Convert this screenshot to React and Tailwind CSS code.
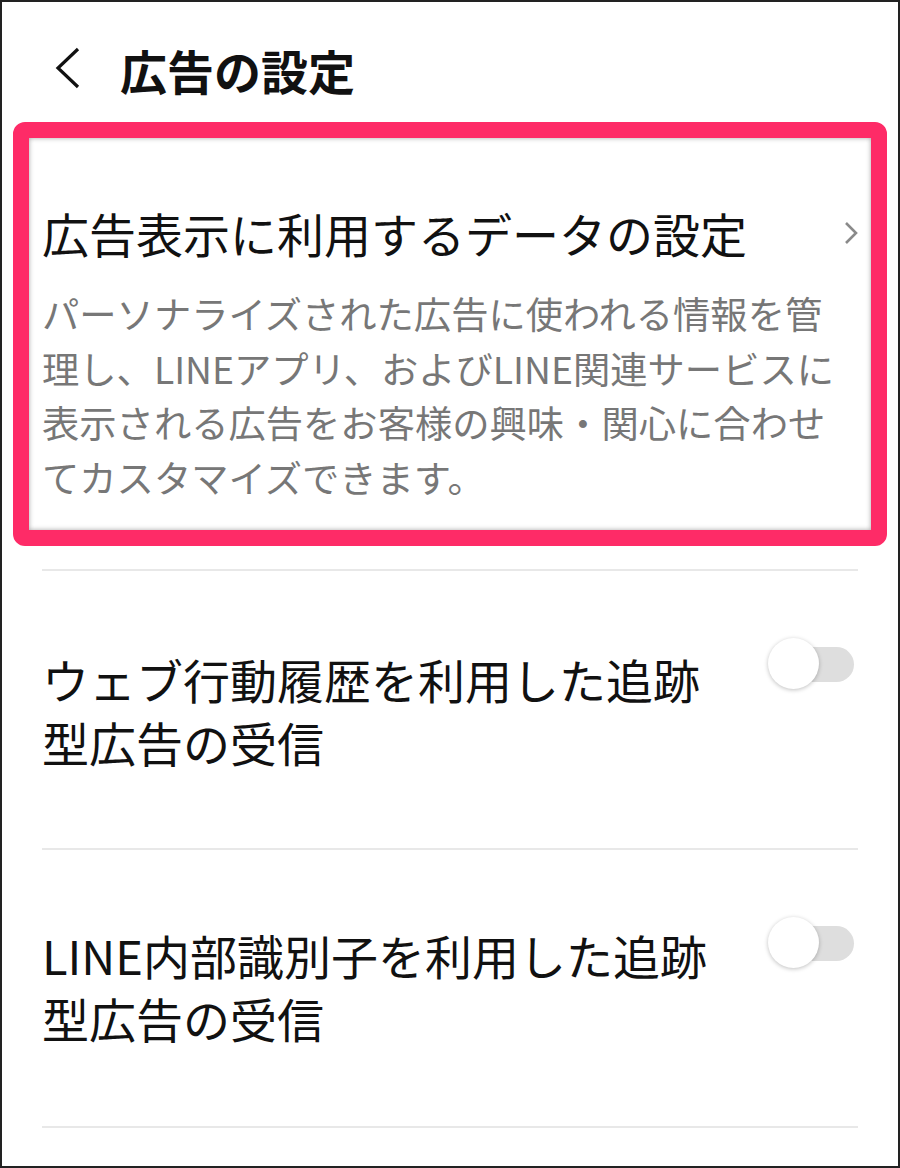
import React from "react";

const font = { fontFamily: '"Noto Sans CJK JP", "Noto Sans", sans-serif' };

const Toggle = () => (
  <div className="relative w-[87px] h-[52px] shrink-0">
    <div className="absolute left-[22px] top-[9px] w-[64px] h-[35px] rounded-full bg-[#dedede]" />
    <div className="absolute left-0 top-0 w-[51px] h-[51px] rounded-full bg-white shadow-[0_1px_4px_rgba(0,0,0,0.25)]" />
  </div>
);

const ToggleRow = ({ lines, toggleTop }) => (
  <div className="flex justify-between items-start">
    <p className="text-[47px] leading-[63px] text-[#111]">
      {lines[0]}
      <br />
      {lines[1]}
    </p>
    <div className={toggleTop}>
      <Toggle />
    </div>
  </div>
);

export default function App() {
  return (
    <div
      className="w-[900px] h-[1168px] bg-white border-2 border-[#222] overflow-hidden box-border"
      style={font}
    >
      {/* ヘッダー */}
      <header className="h-[120px] flex items-start pt-[38px] pl-[50px]">
        <svg width="30" height="44" viewBox="0 0 30 44" className="mt-[6px]">
          <path d="M26 3 L6 22 L26 41" fill="none" stroke="#111" strokeWidth="3.2" />
        </svg>
        <h1 className="ml-[38px] text-[47px] leading-[60px] font-bold text-[#111]">
          広告の設定
        </h1>
      </header>

      {/* 強調枠 */}
      <div className="ml-[11px] w-[874px] h-[424px] border-[16px] border-[#fe2b67] rounded-[12px] shadow-[inset_0_0_5px_rgba(0,0,0,0.35)] box-border">
        <div className="pl-[13px] pt-[64px] pr-[10px]">
          <div className="flex justify-between items-center">
            <h2 className="text-[47px] leading-[62px] text-[#111] font-normal">
              広告表示に利用するデータの設定
            </h2>
            <svg width="16" height="26" viewBox="0 0 16 26" className="mr-[2px]">
              <path d="M3 3 L13 13 L3 23" fill="none" stroke="#8a8a8a" strokeWidth="2.6" />
            </svg>
          </div>
          <p className="mt-[22px] text-[37.3px] leading-[54.5px] text-[#777] whitespace-nowrap">
            パーソナライズされた広告に使われる情報を管
            <br />
            理し、LINEアプリ、およびLINE関連サービスに
            <br />
            表示される広告をお客様の興味・関心に合わせ
            <br />
            てカスタマイズできます。
          </p>
        </div>
      </div>

      <div className="px-[40px]">
        <div className="mt-[23px] h-[2px] bg-[#e8e8e8]" />

        <div className="h-[277px] pt-[76px]">
          <ToggleRow
            lines={["ウェブ行動履歴を利用した追跡", "型広告の受信"]}
            toggleTop="-mt-[9px] mr-[3px]"
          />
        </div>

        <div className="h-[2px] bg-[#e8e8e8]" />

        <div className="h-[276px] pt-[73px]">
          <ToggleRow
            lines={["LINE内部識別子を利用した追跡", "型広告の受信"]}
            toggleTop="-mt-[6px] mr-[3px]"
          />
        </div>

        <div className="h-[2px] bg-[#e8e8e8]" />
      </div>
    </div>
  );
}
